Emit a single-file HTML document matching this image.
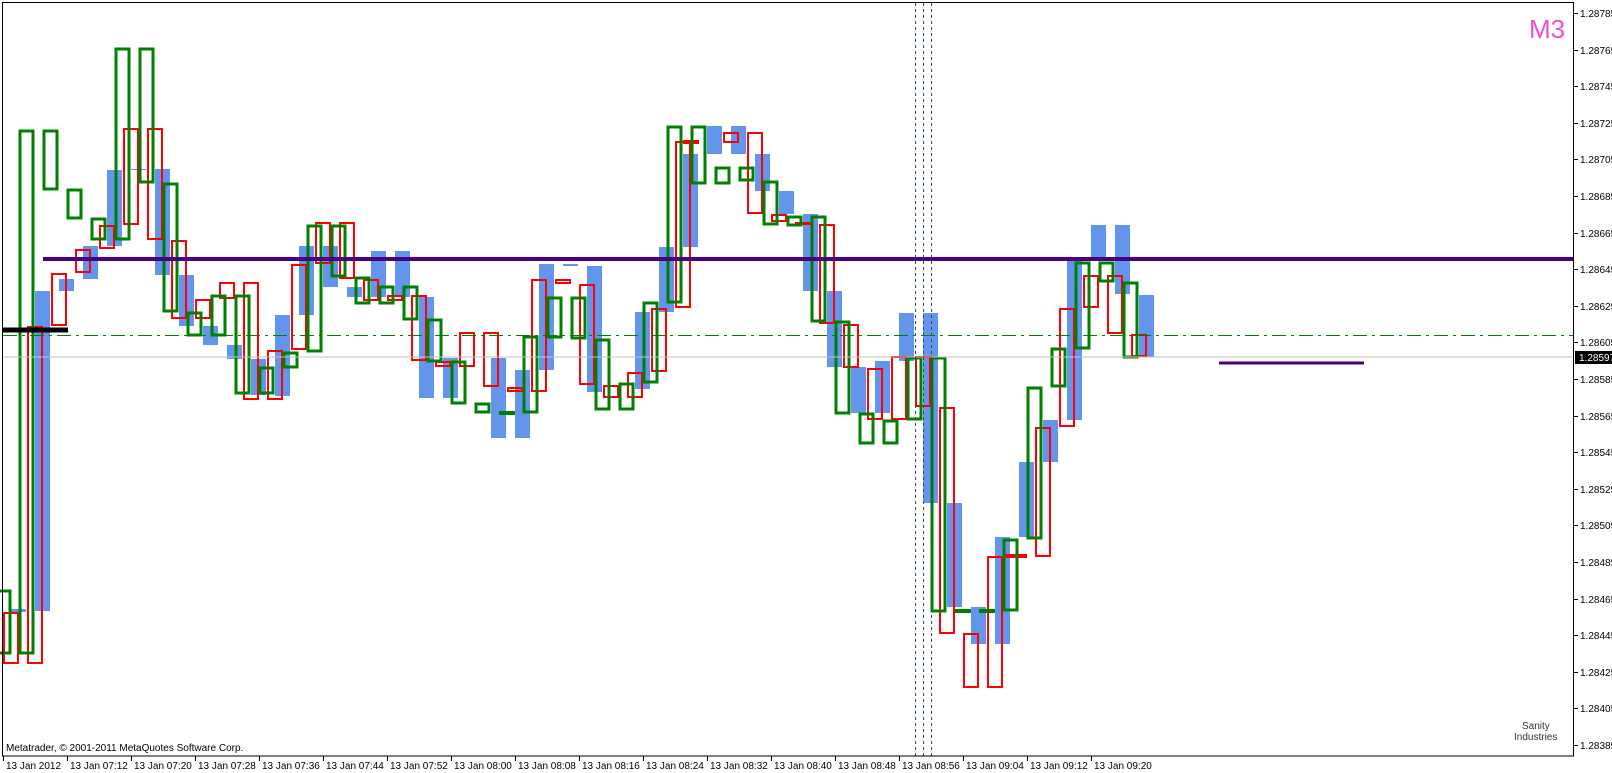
<!DOCTYPE html>
<html><head><meta charset="utf-8"><style>
html,body{margin:0;padding:0;background:#fff;}
svg{display:block;}
text{font-family:"Liberation Sans",sans-serif;font-size:10px;fill:#000;}
</style></head><body>
<svg width="1612" height="773" viewBox="0 0 1612 773" xmlns="http://www.w3.org/2000/svg">
<rect x="0" y="0" width="1612" height="773" fill="#fff"/>
<g fill="#6495ed">
<rect x="11" y="609" width="15" height="3"/>
<rect x="35" y="291" width="15" height="320"/>
<rect x="59" y="279" width="15" height="12"/>
<rect x="83" y="246" width="15" height="33"/>
<rect x="107" y="170" width="15" height="76"/>
<rect x="131" y="169" width="15" height="1"/>
<rect x="155" y="169" width="15" height="106"/>
<rect x="179" y="275" width="15" height="51"/>
<rect x="203" y="326" width="15" height="19"/>
<rect x="227" y="345" width="15" height="14"/>
<rect x="251" y="359" width="15" height="36"/>
<rect x="275" y="315" width="15" height="81"/>
<rect x="299" y="246" width="15" height="69"/>
<rect x="323" y="246" width="15" height="41"/>
<rect x="347" y="287" width="15" height="10"/>
<rect x="371" y="251" width="15" height="46"/>
<rect x="395" y="251" width="15" height="46"/>
<rect x="419" y="297" width="15" height="101"/>
<rect x="443" y="358" width="15" height="40"/>
<rect x="491" y="358" width="15" height="80"/>
<rect x="515" y="370" width="15" height="68"/>
<rect x="539" y="264" width="15" height="106"/>
<rect x="563" y="264" width="15" height="2"/>
<rect x="587" y="266" width="15" height="126"/>
<rect x="635" y="312" width="15" height="77"/>
<rect x="659" y="247" width="15" height="65"/>
<rect x="683" y="154" width="15" height="93"/>
<rect x="707" y="126" width="15" height="28"/>
<rect x="731" y="126" width="15" height="28"/>
<rect x="755" y="154" width="15" height="37"/>
<rect x="779" y="191" width="15" height="23"/>
<rect x="803" y="214" width="15" height="77"/>
<rect x="827" y="291" width="15" height="76"/>
<rect x="851" y="367" width="15" height="46"/>
<rect x="875" y="361" width="15" height="52"/>
<rect x="899" y="313" width="15" height="48"/>
<rect x="923" y="313" width="15" height="190"/>
<rect x="947" y="503" width="15" height="104"/>
<rect x="971" y="607" width="15" height="37"/>
<rect x="995" y="537" width="15" height="107"/>
<rect x="1019" y="462" width="15" height="75"/>
<rect x="1043" y="420" width="15" height="42"/>
<rect x="1067" y="257" width="15" height="163"/>
<rect x="1091" y="225" width="15" height="32"/>
<rect x="1115" y="225" width="15" height="69"/>
<rect x="1139" y="295" width="15" height="62"/>
</g>
<g fill="none" stroke="#ff0000" stroke-width="2">
<rect x="4" y="613" width="14" height="50"/>
<rect x="28" y="327" width="14" height="336"/>
<rect x="52" y="274" width="14" height="51"/>
<rect x="76" y="250" width="14" height="22"/>
<rect x="100" y="226" width="14" height="22"/>
<rect x="124" y="129" width="14" height="95"/>
<rect x="148" y="129" width="14" height="110"/>
<rect x="172" y="241" width="14" height="77"/>
<rect x="196" y="300" width="14" height="18"/>
<rect x="220" y="283" width="14" height="15"/>
<rect x="244" y="283" width="14" height="116"/>
<rect x="268" y="351" width="14" height="48"/>
<rect x="292" y="265" width="14" height="84"/>
<rect x="316" y="223" width="14" height="40"/>
<rect x="340" y="223" width="14" height="55"/>
<rect x="364" y="280" width="14" height="20"/>
<rect x="388" y="296" width="14" height="4"/>
<rect x="412" y="296" width="14" height="64"/>
<rect x="436" y="362" width="14" height="4"/>
<rect x="460" y="333" width="14" height="33"/>
<rect x="484" y="333" width="14" height="53"/>
<rect x="508" y="388" width="14" height="3"/>
<rect x="532" y="280" width="14" height="111"/>
<rect x="556" y="280" width="14" height="3"/>
<rect x="580" y="285" width="14" height="99"/>
<rect x="604" y="386" width="14" height="11"/>
<rect x="628" y="373" width="14" height="24"/>
<rect x="652" y="309" width="14" height="62"/>
<rect x="676" y="142" width="14" height="165"/>
<rect x="724" y="133" width="14" height="9"/>
<rect x="748" y="133" width="14" height="80"/>
<rect x="772" y="215" width="14" height="6"/>
<rect x="796" y="223" width="14" height="1"/>
<rect x="820" y="225" width="14" height="98"/>
<rect x="844" y="325" width="14" height="42"/>
<rect x="868" y="369" width="14" height="50"/>
<rect x="892" y="357" width="14" height="62"/>
<rect x="916" y="357" width="14" height="49"/>
<rect x="940" y="408" width="14" height="225"/>
<rect x="964" y="634" width="14" height="53"/>
<rect x="988" y="557" width="14" height="130"/>
<rect x="1036" y="428" width="14" height="128"/>
<rect x="1060" y="309" width="14" height="117"/>
<rect x="1084" y="276" width="14" height="31"/>
<rect x="1108" y="276" width="14" height="57"/>
<rect x="1132" y="335" width="14" height="21"/>
</g>
<g stroke="#ff0000" stroke-width="4">
<line x1="683" y1="142" x2="699" y2="142"/>
<line x1="1003" y1="556" x2="1027" y2="556"/>
</g>
<g fill="none" stroke="#008000" stroke-width="3">
<rect x="-4" y="591" width="14" height="62"/>
<rect x="20" y="131" width="13" height="522"/>
<rect x="44" y="131" width="13" height="58"/>
<rect x="68" y="190" width="13" height="28"/>
<rect x="92" y="219" width="13" height="20"/>
<rect x="116" y="49" width="13" height="190"/>
<rect x="140" y="49" width="13" height="133"/>
<rect x="164" y="184" width="13" height="127"/>
<rect x="188" y="313" width="13" height="22"/>
<rect x="212" y="296" width="13" height="39"/>
<rect x="236" y="296" width="13" height="97"/>
<rect x="260" y="368" width="13" height="25"/>
<rect x="284" y="353" width="13" height="14"/>
<rect x="308" y="226" width="13" height="125"/>
<rect x="332" y="226" width="13" height="50"/>
<rect x="356" y="278" width="13" height="25"/>
<rect x="380" y="287" width="13" height="16"/>
<rect x="404" y="287" width="13" height="32"/>
<rect x="428" y="320" width="13" height="41"/>
<rect x="452" y="362" width="13" height="41"/>
<rect x="476" y="404" width="13" height="8"/>
<rect x="524" y="337" width="13" height="75"/>
<rect x="548" y="298" width="13" height="39"/>
<rect x="572" y="298" width="13" height="40"/>
<rect x="596" y="340" width="13" height="69"/>
<rect x="620" y="384" width="13" height="25"/>
<rect x="644" y="303" width="13" height="79"/>
<rect x="668" y="127" width="13" height="175"/>
<rect x="692" y="127" width="13" height="56"/>
<rect x="716" y="168" width="13" height="15"/>
<rect x="740" y="168" width="13" height="12"/>
<rect x="764" y="182" width="13" height="42"/>
<rect x="788" y="217" width="13" height="8"/>
<rect x="812" y="217" width="13" height="104"/>
<rect x="836" y="322" width="13" height="91"/>
<rect x="860" y="414" width="13" height="29"/>
<rect x="884" y="421" width="13" height="22"/>
<rect x="908" y="358" width="13" height="61"/>
<rect x="932" y="358" width="13" height="253"/>
<rect x="1004" y="540" width="13" height="70"/>
<rect x="1028" y="388" width="13" height="150"/>
<rect x="1052" y="349" width="13" height="37"/>
<rect x="1076" y="263" width="13" height="85"/>
<rect x="1100" y="263" width="13" height="18"/>
<rect x="1124" y="283" width="13" height="74"/>
</g>
<g stroke="#008000" stroke-width="4">
<line x1="499" y1="413" x2="515" y2="413"/>
<line x1="955" y1="611" x2="971" y2="611"/>
<line x1="979" y1="611" x2="995" y2="611"/>
</g>
<line x1="3" y1="357" x2="1574" y2="357" stroke="#c0c0c0" stroke-width="1"/>
<line x1="3" y1="335.5" x2="1574" y2="335.5" stroke="#008000" stroke-width="1" stroke-dasharray="14,5,3,5"/>
<line x1="43" y1="259" x2="1574" y2="259" stroke="#4b0082" stroke-width="4"/>
<line x1="1219" y1="363" x2="1364" y2="363" stroke="#4b0082" stroke-width="3"/>
<line x1="3" y1="330" x2="68" y2="330" stroke="#000" stroke-width="5"/>
<g stroke="#2f4f4f" stroke-width="1" stroke-dasharray="3,3">
<line x1="915.5" y1="3" x2="915.5" y2="756"/>
<line x1="923.5" y1="3" x2="923.5" y2="756"/>
<line x1="931.5" y1="3" x2="931.5" y2="756"/>
</g>
<rect x="2.5" y="2.5" width="1571" height="753.5" fill="none" stroke="#000" stroke-width="1"/>
<text x="1529" y="38" style="font-size:26px;fill:#f04fc8;">M3</text>
<text x="6" y="751">Metatrader, © 2001-2011 MetaQuotes Software Corp.</text>
<text x="1522" y="729" style="font-size:10px;fill:#333;">Sanity</text>
<text x="1514" y="740" style="font-size:10px;fill:#333;">Industries</text>
<g stroke="#000" stroke-width="1">
<line x1="1574" y1="13.5" x2="1578" y2="13.5"/><line x1="1574" y1="50.5" x2="1578" y2="50.5"/><line x1="1574" y1="86.5" x2="1578" y2="86.5"/><line x1="1574" y1="123.5" x2="1578" y2="123.5"/><line x1="1574" y1="159.5" x2="1578" y2="159.5"/><line x1="1574" y1="196.5" x2="1578" y2="196.5"/><line x1="1574" y1="233.5" x2="1578" y2="233.5"/><line x1="1574" y1="269.5" x2="1578" y2="269.5"/><line x1="1574" y1="306.5" x2="1578" y2="306.5"/><line x1="1574" y1="342.5" x2="1578" y2="342.5"/><line x1="1574" y1="379.5" x2="1578" y2="379.5"/><line x1="1574" y1="416.5" x2="1578" y2="416.5"/><line x1="1574" y1="452.5" x2="1578" y2="452.5"/><line x1="1574" y1="489.5" x2="1578" y2="489.5"/><line x1="1574" y1="525.5" x2="1578" y2="525.5"/><line x1="1574" y1="562.5" x2="1578" y2="562.5"/><line x1="1574" y1="599.5" x2="1578" y2="599.5"/><line x1="1574" y1="635.5" x2="1578" y2="635.5"/><line x1="1574" y1="672.5" x2="1578" y2="672.5"/><line x1="1574" y1="708.5" x2="1578" y2="708.5"/><line x1="1574" y1="745.5" x2="1578" y2="745.5"/>
</g>
<g>
<text x="1580" y="17">1.28785</text><text x="1580" y="54">1.28765</text><text x="1580" y="90">1.28745</text><text x="1580" y="127">1.28725</text><text x="1580" y="163">1.28705</text><text x="1580" y="200">1.28685</text><text x="1580" y="237">1.28665</text><text x="1580" y="273">1.28645</text><text x="1580" y="310">1.28625</text><text x="1580" y="346">1.28605</text><text x="1580" y="383">1.28585</text><text x="1580" y="420">1.28565</text><text x="1580" y="456">1.28545</text><text x="1580" y="493">1.28525</text><text x="1580" y="529">1.28505</text><text x="1580" y="566">1.28485</text><text x="1580" y="603">1.28465</text><text x="1580" y="639">1.28445</text><text x="1580" y="676">1.28425</text><text x="1580" y="712">1.28405</text><text x="1580" y="749">1.28385</text>
</g>
<rect x="1575" y="351" width="37" height="13" fill="#000"/>
<text x="1579" y="361" style="fill:#fff;">1.28597</text>
<g stroke="#000" stroke-width="1">
<line x1="3.5" y1="756" x2="3.5" y2="761"/><line x1="67.5" y1="756" x2="67.5" y2="761"/><line x1="131.5" y1="756" x2="131.5" y2="761"/><line x1="195.5" y1="756" x2="195.5" y2="761"/><line x1="259.5" y1="756" x2="259.5" y2="761"/><line x1="323.5" y1="756" x2="323.5" y2="761"/><line x1="387.5" y1="756" x2="387.5" y2="761"/><line x1="451.5" y1="756" x2="451.5" y2="761"/><line x1="515.5" y1="756" x2="515.5" y2="761"/><line x1="579.5" y1="756" x2="579.5" y2="761"/><line x1="643.5" y1="756" x2="643.5" y2="761"/><line x1="707.5" y1="756" x2="707.5" y2="761"/><line x1="771.5" y1="756" x2="771.5" y2="761"/><line x1="835.5" y1="756" x2="835.5" y2="761"/><line x1="899.5" y1="756" x2="899.5" y2="761"/><line x1="963.5" y1="756" x2="963.5" y2="761"/><line x1="1027.5" y1="756" x2="1027.5" y2="761"/><line x1="1091.5" y1="756" x2="1091.5" y2="761"/>
</g>
<g>
<text x="6" y="769">13 Jan 2012</text><text x="70" y="769">13 Jan 07:12</text><text x="134" y="769">13 Jan 07:20</text><text x="198" y="769">13 Jan 07:28</text><text x="262" y="769">13 Jan 07:36</text><text x="326" y="769">13 Jan 07:44</text><text x="390" y="769">13 Jan 07:52</text><text x="454" y="769">13 Jan 08:00</text><text x="518" y="769">13 Jan 08:08</text><text x="582" y="769">13 Jan 08:16</text><text x="646" y="769">13 Jan 08:24</text><text x="710" y="769">13 Jan 08:32</text><text x="774" y="769">13 Jan 08:40</text><text x="838" y="769">13 Jan 08:48</text><text x="902" y="769">13 Jan 08:56</text><text x="966" y="769">13 Jan 09:04</text><text x="1030" y="769">13 Jan 09:12</text><text x="1094" y="769">13 Jan 09:20</text>
</g>
</svg>
</body></html>
